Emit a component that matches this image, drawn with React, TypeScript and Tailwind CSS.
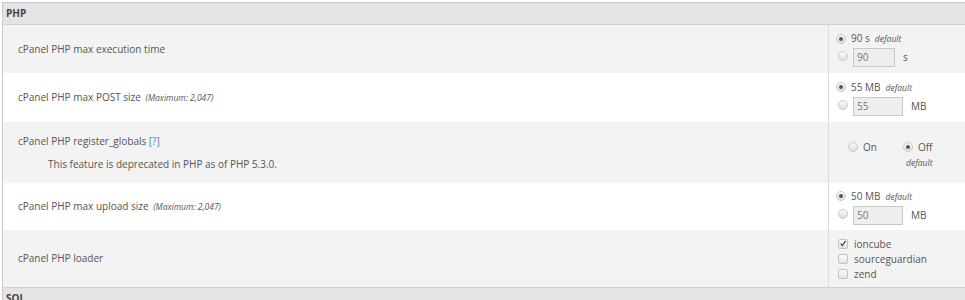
import React from 'react'

const font = { fontFamily: '"Open Sans", "DejaVu Sans", sans-serif' }

function Radio({ checked }: { checked?: boolean }) {
  return (
    <span className="inline-flex h-[10px] w-[10px] flex-shrink-0 items-center justify-center rounded-full border border-[#cacaca] bg-gradient-to-b from-[#fcfcfc] to-[#dddddd]">
      {checked && <span className="h-[4px] w-[4px] rounded-full bg-[#555]" />}
    </span>
  )
}

function Check({ checked }: { checked?: boolean }) {
  return (
    <span className="inline-flex h-[10px] w-[10px] flex-shrink-0 items-center justify-center rounded-[2px] border border-[#c2c2c2] bg-gradient-to-b from-[#fcfcfc] to-[#e2e2e2]">
      {checked && (
        <svg viewBox="0 0 10 10" className="h-[9px] w-[9px]">
          <path d="M2 5.2 L4.2 7.5 L8.2 1.8" fill="none" stroke="#444" strokeWidth="1.6" />
        </svg>
      )}
    </span>
  )
}

function Default() {
  return <span className="ml-[5px] text-[8.5px] italic text-[#555]">default</span>
}

function ValueCell({ value, unit, inputW }: { value: string; unit: string; inputW: string }) {
  return (
    <div className="flex flex-col gap-[2px] pl-[7px]">
      <div className="flex items-center gap-[5px]">
        <Radio checked />
        <span>
          {value} {unit}
          <Default />
        </span>
      </div>
      <div className="flex items-center gap-[5px]">
        <span className="ml-[2px]"><Radio /></span>
        <span className={`flex h-[19px] items-center border border-[#c8c8c8] bg-[#eeeeee] pl-[3px] text-[#777] ${inputW}`}>{value}</span>
        <span className="ml-[3px]">{unit}</span>
      </div>
    </div>
  )
}

function Row({
  bg,
  h,
  label,
  children,
}: {
  bg: string
  h: string
  label: React.ReactNode
  children: React.ReactNode
}) {
  return (
    <div className={`grid grid-cols-[1fr_137px] ${bg} ${h}`}>
      <div className="flex flex-col justify-center pl-[15px]">{label}</div>
      <div className="flex flex-col justify-center border-l border-[#dcdcdc]">{children}</div>
    </div>
  )
}

function Max() {
  return <span className="ml-[2px] text-[8.5px] italic text-[#555]">(Maximum: 2,047)</span>
}

export default function App() {
  return (
    <div className="h-[300px] w-[965px] overflow-hidden bg-white pl-[2px] pt-[2px] text-[10px] text-[#555]" style={font}>
      <div className="border-l border-t border-[#c9c9c9]">
        <div className="flex h-[22px] items-center border-b border-[#d2d2d2] bg-[#e4e4e4] pl-[3px] text-[10px] font-bold text-[#444]">
          PHP
        </div>
        <Row bg="bg-[#f3f3f3]" h="h-[48px]" label={<span>cPanel PHP max execution time</span>}>
          <ValueCell value="90" unit="s" inputW="w-[42px]" />
        </Row>
        <Row bg="bg-white" h="h-[49px]" label={<span>cPanel PHP max POST size <Max /></span>}>
          <ValueCell value="55" unit="MB" inputW="w-[50px]" />
        </Row>
        <Row
          bg="bg-[#f3f3f3]"
          h="h-[61px]"
          label={
            <div className="flex flex-col gap-[8px]">
              <span>
                cPanel PHP register_globals <span className="text-[#3a8ec8]">[?]</span>
              </span>
              <span className="pl-[30px]">This feature is deprecated in PHP as of PHP 5.3.0.</span>
            </div>
          }
        >
          <div className="flex items-start pl-[19px] pt-[4px]">
            <div className="flex items-center gap-[5px]">
              <Radio />
              <span>On</span>
            </div>
            <div className="ml-[26px] flex flex-col items-end">
              <div className="flex items-center gap-[5px]">
                <Radio checked />
                <span>Off</span>
              </div>
              <span className="mt-[2px] text-[8.5px] italic">default</span>
            </div>
          </div>
        </Row>
        <Row bg="bg-white" h="h-[47px]" label={<span>cPanel PHP max upload size <Max /></span>}>
          <ValueCell value="50" unit="MB" inputW="w-[50px]" />
        </Row>
        <Row bg="bg-[#f3f3f3]" h="h-[57px]" label={<span>cPanel PHP loader</span>}>
          <div className="flex flex-col gap-[3px] pl-[9px] leading-[12px]">
            {[
              ['ioncube', true],
              ['sourceguardian', false],
              ['zend', false],
            ].map(([name, c]) => (
              <div key={name as string} className="flex items-center gap-[6px]">
                <Check checked={c as boolean} />
                <span>{name as string}</span>
              </div>
            ))}
          </div>
        </Row>
        <div className="flex h-[22px] items-center border-t border-[#d2d2d2] bg-[#e4e4e4] pl-[3px] text-[10px] font-bold text-[#444]">
          SQL
        </div>
      </div>
    </div>
  )
}
